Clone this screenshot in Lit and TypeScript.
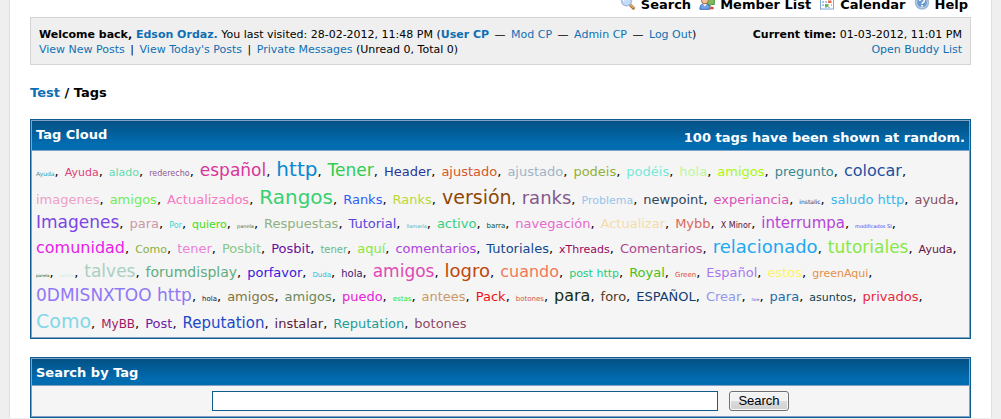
import { LitElement, html, css, svg } from "lit";
import { customElement } from "lit/decorators.js";
import { styleMap } from "lit/directives/style-map.js";

type Tag = [label: string, size: number, color: string];

const ROWS: Tag[][] = [
  [
    ["Ayuda", 6, "#2f9cb4"], ["Ayuda", 11, "#e0407c"], ["alado", 11, "#62dcb0"], ["rederecho", 8, "#8c5a94"],
    ["español", 17, "#d8369a"], ["http", 20, "#0888d0"], ["Tener", 17, "#30cc50"], ["Header", 13, "#283898"],
    ["ajustado", 13, "#d85828"], ["ajustado", 13, "#a0b4c8"], ["podeis", 13, "#94b038"], ["podéis", 13, "#78e8d8"],
    ["hola", 13, "#b8f8a0"], ["amigos", 13, "#a8f810"], ["pregunto", 13, "#388890"], ["colocar", 16, "#1c50a0"],
  ],
  [
    ["imagenes", 13, "#eca0c8"], ["amigos", 13, "#70ec58"], ["Actualizados", 13, "#f878c0"], ["Rangos", 20, "#38d070"],
    ["Ranks", 13, "#2c60f4"], ["Ranks", 13, "#bcd838"], ["versión", 19, "#8c4808"], ["ranks", 18, "#84588c"],
    ["Problema", 11, "#98c4ec"], ["newpoint", 13, "#304458"], ["experiancia", 13, "#d850b8"], ["instalic", 6, "#1c3c88"],
    ["saludo http", 13, "#38b8f0"], ["ayuda", 13, "#885060"],
  ],
  [
    ["Imagenes", 17, "#7c44e4"], ["para", 13, "#cc98a8"], ["Por", 8, "#38d8d8"], ["quiero", 11, "#44dc10"],
    ["panela", 5, "#686820"], ["Respuestas", 13, "#90b080"], ["Tutorial", 13, "#5844d8"], ["llamaría", 5, "#30bcd0"],
    ["activo", 13, "#30d080"], ["barra", 7, "#084c34"], ["navegación", 13, "#e868cc"], ["Actualizar", 13, "#f4dca8"],
    ["Mybb", 13, "#d86860"], ["X Minor", 8, "#581040"], ["interrumpa", 15, "#b444d8"], ["modificados SI", 5, "#3848f8"],
  ],
  [
    ["comunidad", 16, "#e820e8"], ["Como", 11, "#88b040"], ["tener", 13, "#ec80dc"], ["Posbit", 13, "#88c888"],
    ["Posbit", 13, "#6c10a0"], ["tener", 10, "#68b888"], ["aquí", 13, "#88e838"], ["comentarios", 13, "#b040e0"],
    ["Tutoriales", 13, "#104890"], ["xThreads", 11, "#98085c"], ["Comentarios", 13, "#b04490"],
    ["relacionado", 18, "#20a8f0"], ["tutoriales", 17, "#88e848"], ["Ayuda", 11, "#681048"],
  ],
  [
    ["panela", 4, "#285c20"], ["tutorial", 4, "#d0ece4"], ["talves", 17, "#a8d0c0"], ["forumdisplay", 14, "#60ac80"],
    ["porfavor", 13, "#3818e0"], ["Duda", 7, "#20c0e0"], ["hola", 10, "#401870"], ["amigos", 17, "#e048b8"],
    ["logro", 18, "#c04808"], ["cuando", 16, "#f07858"], ["post http", 11, "#20cc80"], ["Royal", 13, "#48c018"],
    ["Green", 7, "#e05040"], ["Español", 13, "#ac78f0"], ["estos", 13, "#fcf468"], ["greenAqui", 11, "#e49048"],
  ],
  [
    ["0DMISNXTOO http", 17, "#9078f4"], ["hola", 7, "#200c40"], ["amigos", 13, "#847440"], ["amigos", 13, "#688858"],
    ["puedo", 13, "#e820d8"], ["estas", 7, "#10e838"], ["antees", 13, "#cc9868"], ["Pack", 13, "#f01010"],
    ["botones", 7, "#d05848"], ["para", 16, "#182c10"], ["foro", 13, "#583820"], ["ESPAÑOL", 13, "#103c70"],
    ["Crear", 13, "#9098e8"], ["fare", 4, "#6848c8"], ["para", 13, "#1c6cb0"], ["asuntos", 11, "#103c50"],
    ["privados", 13, "#e82840"],
  ],
  [
    ["Como", 19, "#80d8e8"], ["MyBB", 12, "#a01860"], ["Post", 13, "#7020a8"], ["Reputation", 15, "#2048c8"],
    ["instalar", 13, "#582038"], ["Reputation", 13, "#209c98"], ["botones", 13, "#8c4868"],
  ],
];

const searchIcon = svg`
  <path d="M9.800 10.500l3.600 3.600" stroke="#a8703c" stroke-width="3" stroke-linecap="round"/>
  <path d="M10 10.300l3.200 3.200" stroke="#e8b070" stroke-width="1.300" stroke-linecap="round"/>
  <circle cx="6.500" cy="6.800" r="5" fill="#c4dcf8" stroke="#a8bce0" stroke-width="1.400"/>
  <path d="M3.600 7a3 3 0 0 1 3-3" stroke="#fff" stroke-width="1.300" fill="none"/>`;

const membersIcon = svg`
  <path d="M8.500 4.500h6.800v6h-3l-2.200 2v-2H8.500z" fill="#7cbc5c" stroke="#4c9440"/>
  <path d="M.9 15.300c0-4 1.600-5.600 4.900-5.600s5 1.600 5 5.600z" fill="#6ea4e8" stroke="#3c6cb8"/>
  <path d="M4 10l1.900 2.400L7.800 10z" fill="#fff"/>
  <circle cx="5.900" cy="6.400" r="3.400" fill="#f0c498" stroke="#a86838"/>
  <path d="M2.400 6.300C2.200 3.400 4 2.200 6 2.200s3.700 1.400 3.400 4.100C8 5.400 6.500 5 5 4.700z" fill="#b4683c"/>
  <path d="M11.400 12.200l3.300 1v2h-3.600" fill="#d04838"/>`;

const calendarIcon = svg`
  <rect x="1.500" y="1.500" width="13" height="13.500" fill="#fff" stroke="#7ea6d8"/>
  <rect x="1" y="1" width="14" height="4" fill="#5c90d8"/>
  <path d="M3 7h2v2H3zM6 7h2v2H6zM3 10h2v2H3zM12 10h1v2h-1zM6 13h2v1H6zM9 13h2v1H9z" fill="#a8c4e8"/>
  <path d="M9 6.500h3.500V9H9z" fill="#e86848"/>
  <path d="M6 10h3.500v3H6z" fill="#68b858"/>`;

const helpIcon = svg`
  <circle cx="8" cy="8.500" r="6.600" fill="#6c98d0" stroke="#a8bcd8" stroke-width="1.400"/>
  <circle cx="8" cy="8.500" r="5.300" fill="none" stroke="#dce8f8" stroke-width=".8"/>
  <path d="M5.900 7c0-1.500 1-2.200 2.200-2.200s2.200.8 2.200 2c0 1.600-2.200 1.700-2.200 3.300" fill="none" stroke="#fff" stroke-width="1.600"/>
  <rect x="7.200" y="11" width="1.700" height="1.700" fill="#fff"/>`;

const NAV = [
  { label: "Search", icon: searchIcon },
  { label: "Member List", icon: membersIcon },
  { label: "Calendar", icon: calendarIcon },
  { label: "Help", icon: helpIcon },
];

@customElement("app-root")
export class AppRoot extends LitElement {
  static styles = css`
    :host {
      display: block;
      box-sizing: border-box;
      min-height: 100vh;
      overflow: hidden;
      background: #efefef;
      color: #000;
      font: 13px/18px Verdana, "DejaVu Sans", sans-serif;
    }
    * { box-sizing: border-box; }
    a { color: #0f6fb4; text-decoration: none; }
    .page {
      min-height: 100vh;
      margin: 0 9px;
      padding: 0 20px;
      background: #fff;
      border: solid #e0e0e0;
      border-width: 0 1px;
    }
    .nav {
      display: flex;
      justify-content: flex-end;
      gap: 8px;
      margin-top: -6px;
      padding: 0 3px 1px 0;
      line-height: 22px;
    }
    .nav a {
      display: flex;
      align-items: flex-start;
      gap: 5px;
      color: #000;
      font-weight: bold;
    }
    .icon { width: 16px; height: 16px; display: block; }
    .panel {
      display: flex;
      justify-content: space-between;
      padding: 9px 8px 7px;
      background: #efefef;
      border: 1px solid #d4d4d4;
      font-size: 11px;
      line-height: 15px;
    }
    .right { text-align: right; }
    .sep { margin: 0 2px; }
    .crumbs { margin: 19px 0 17px; font-weight: bold; }
    .box {
      margin-bottom: 18px;
      padding: 1px;
      background: #81a2c4;
      border: 1px solid #0f5c8e;
    }
    .head {
      display: flex;
      justify-content: space-between;
      padding: 5px 4px 3px;
      color: #fff;
      background: linear-gradient(#035184, #026cb1 80%);
      font-weight: bold;
    }
    .title { margin: 0; font-size: 13px; }
    .note { padding-top: 3px; }
    .cloud {
      margin-top: 1px;
      padding: 5px 4px 3px;
      background: #f5f5f5;
      line-height: 1.38;
    }
    .row {
      display: flex;
      flex-wrap: wrap;
      align-items: baseline;
      gap: 0 6px;
      margin: 0;
      padding: 0;
      list-style: none;
      white-space: nowrap;
    }
    .search {
      display: flex;
      justify-content: center;
      gap: 11px;
      margin-top: 1px;
      padding: 5px 0;
      background: #f5f5f5;
    }
    .field {
      width: 54%;
      height: 20px;
      padding: 1px 3px;
      border: 1px solid #0f5c8e;
      background: #fff;
      font: inherit;
    }
    .button {
      height: 20px;
      padding: 0 8px;
      border: 1px solid #707070;
      border-radius: 3px;
      background: linear-gradient(#f2f2f2 0 50%, #dcdcdc 50%, #cfcfcf);
      box-shadow: inset 0 0 0 1px #f8f8f8;
      color: #000;
      font: 13px/18px "Liberation Sans", Arial, sans-serif;
    }
  `;

  private renderRow(row: Tag[], last: boolean) {
    return html`<ul class="row">
      ${row.map(([label, size, color], i) => html`<li><a href="#" style=${styleMap({ fontSize: `${size}px`, color })}>${label}</a>${last && i === row.length - 1 ? "" : ","}</li>`)}
    </ul>`;
  }

  render() {
    const dash = html`<span class="sep">—</span>`;
    const bar = html`<span class="sep">|</span>`;
    return html`
      <div class="page">
        <nav class="nav">
          ${NAV.map((n) => html`<a href="#"><svg class="icon" viewBox="0 0 16 16" fill="none" aria-hidden="true">${n.icon}</svg>${n.label}</a>`)}
        </nav>
        <div class="panel">
          <div>
            <strong>Welcome back, <a href="#">Edson Ordaz.</a></strong> You last visited: 28-02-2012, 11:48 PM (<a href="#"><strong>User CP</strong></a> ${dash} <a href="#">Mod CP</a> ${dash} <a href="#">Admin CP</a> ${dash} <a href="#">Log Out</a>)<br>
            <a href="#">View New Posts</a> ${bar} <a href="#">View Today's Posts</a> ${bar} <a href="#">Private Messages</a> (Unread 0, Total 0)
          </div>
          <div class="right">
            <strong>Current time:</strong> 01-03-2012, 11:01 PM<br>
            <a href="#">Open Buddy List</a>
          </div>
        </div>
        <div class="crumbs"><a href="#">Test</a> / Tags</div>
        <section class="box">
          <div class="head">
            <h2 class="title">Tag Cloud</h2>
            <span class="note">100 tags have been shown at random.</span>
          </div>
          <div class="cloud">${ROWS.map((r, i) => this.renderRow(r, i === ROWS.length - 1))}</div>
        </section>
        <section class="box">
          <div class="head"><h2 class="title"><label for="tag">Search by Tag</label></h2></div>
          <form class="search" @submit=${(e: Event) => e.preventDefault()}>
            <input class="field" id="tag" type="text">
            <button class="button" type="submit">Search</button>
          </form>
        </section>
      </div>
    `;
  }
}
